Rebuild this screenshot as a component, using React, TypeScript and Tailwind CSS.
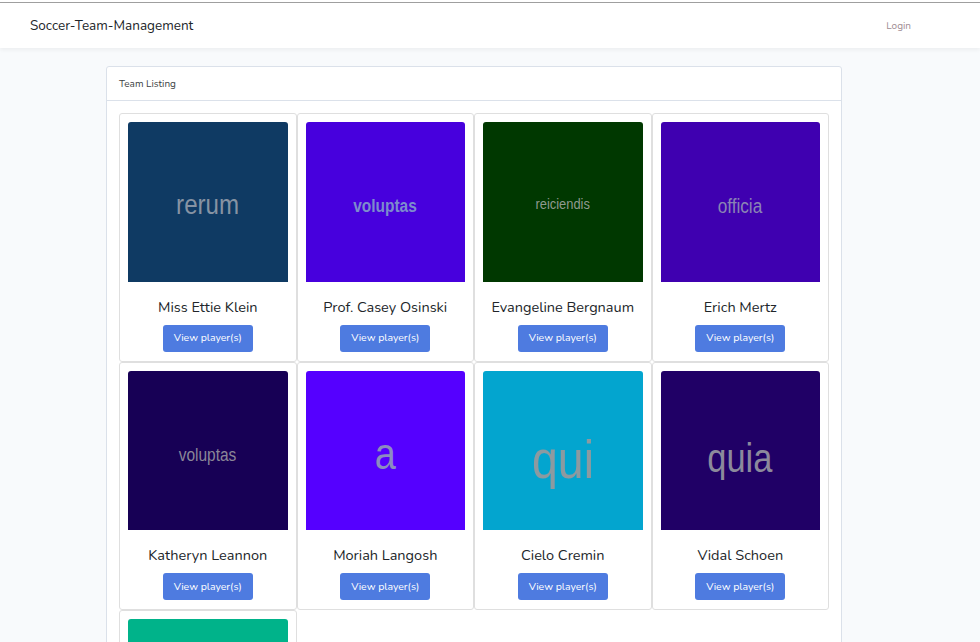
const teams = [
  { name: 'Miss Ettie Klein', bg: 'bg-[#0f3a63]', word: 'rerum', text: 'text-[28px] translate-y-[3px] text-[#8693a3]' },
  { name: 'Prof. Casey Osinski', bg: 'bg-[#4700dd]', word: 'voluptas', text: 'text-[18px] font-bold translate-y-[5px] text-[#7d8ccc]' },
  { name: 'Evangeline Bergnaum', bg: 'bg-[#003800]', word: 'reiciendis', text: 'text-[15px] translate-y-[2px] text-[#8f9a8f]' },
  { name: 'Erich Mertz', bg: 'bg-[#3f00b0]', word: 'officia', text: 'text-[20px] font-light translate-y-[4px] text-[#8a84b4]' },
  { name: 'Katheryn Leannon', bg: 'bg-[#170055]', word: 'voluptas', text: 'text-[18px] translate-y-[5px] text-[#8a8798]' },
  { name: 'Moriah Langosh', bg: 'bg-[#5500ff]', word: 'a', text: 'text-[44px] translate-y-[4px] text-[#8c8cc0]' },
  { name: 'Cielo Cremin', bg: 'bg-[#03a5cf]', word: 'qui', text: 'text-[54px] translate-y-[9px] text-[#8c9aa0]' },
  { name: 'Vidal Schoen', bg: 'bg-[#200066]', word: 'quia', text: 'text-[40px] translate-y-[8px] text-[#8c8a9c]' },
  { name: '', bg: 'bg-[#00b38a]', word: '', text: '' },
];

function TeamCard({ team }: { team: (typeof teams)[number] }) {
  return (
    <div className="flex flex-col items-center border border-[#dfdfdf] rounded-[3px] p-[8px] pb-[9px]">
      <div
        className={`w-full aspect-square rounded-t-[3px] flex items-center justify-center ${team.bg}`}
        style={{ fontFamily: '"Liberation Sans", Arial, sans-serif' }}
      >
        <span className={`block scale-x-[0.86] ${team.text}`}>{team.word}</span>
      </div>
      {team.name && (
        <>
          <div className="mt-[16px] text-[14.5px] leading-[18px] text-[#212529]">{team.name}</div>
          <button className="mt-[9px] h-[27px] w-[90px] rounded-[3px] bg-[#4e7be0] text-[10.5px] text-white">
            View player(s)
          </button>
        </>
      )}
    </div>
  );
}

export default function App() {
  return (
    <div className="min-h-screen bg-[#f8fafc]" style={{ fontFamily: 'Nunito, Lato, "Open Sans", sans-serif' }}>
      <div className="h-[2px] bg-white" />
      <div className="h-px bg-[#a0a0a0]" />
      <nav className="bg-white shadow-[0_2px_4px_rgba(0,0,0,0.05)]">
        <div className="flex items-center justify-between h-[45px] pt-px pl-[30px] pr-[69px]">
          <span className="text-[13.5px] text-[#212529]">Soccer-Team-Management</span>
          <span className="text-[10px] text-[#a08c92]">Login</span>
        </div>
      </nav>

      <main className="pt-[18px] pl-[106px]">
        <div className="w-[736px] bg-white border border-[#dbe1ea] rounded-[3px]">
          <div className="h-[34px] flex items-center px-[12px] pt-[2px] border-b border-[#dbe1ea] text-[10px] text-[#3b3f44]">
            Team Listing
          </div>
          <div className="p-[12px] pb-[24px]">
            <div className="grid grid-cols-4">
              {teams.map((t, i) => (
                <TeamCard key={i} team={t} />
              ))}
            </div>
          </div>
        </div>
      </main>
    </div>
  );
}
